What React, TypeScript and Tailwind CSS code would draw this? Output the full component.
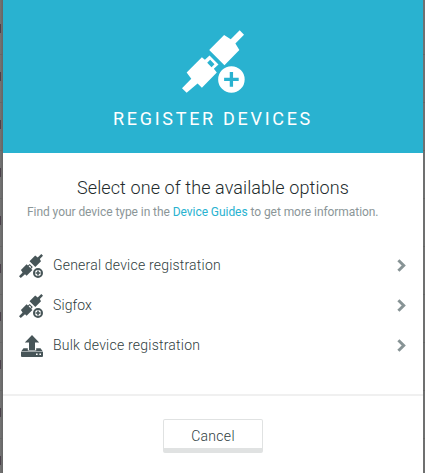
type IconProps = { className?: string; plus: string };

function ConnectorIcon({ className, plus }: IconProps) {
  return (
    <svg viewBox="35 28 190 190" className={className} fill="currentColor" aria-hidden="true">
      <path d="M209 29 L222 42 L196 69 L208 88 L163 134 L117 88 L162 43 L182 56 Z" />
      <path
        fillRule="evenodd"
        d="M95 110 L104 118 L118 105 L145 132 L131 145 L140 156 L95 202 L82 189 L49 217 L35 204 L63 175 L49 156 Z M120 118 L111 127 L124 140 L133 131 Z"
      />
      <circle cx="184" cy="177" r="40" />
      <path d="M179 155h10v17h17v10h-17v17h-10v-17h-17v-10h17z" fill={plus} />
    </svg>
  );
}

function SmallConnectorIcon() {
  return (
    <svg viewBox="0 0 24 24" className="mt-0.5 h-6 w-6" fill="currentColor" aria-hidden="true">
      <path d="M22.3 0 L24 1.7 L20.8 5 L22 7.3 L16.3 13 L10.5 7.3 L16.2 1.6 L18.7 3.5 Z" />
      <path
        fillRule="evenodd"
        d="M7.6 10.2 L9 11.5 L10.6 9.9 L13.8 13.1 L12.2 14.7 L13.4 16 L7.6 21.7 L6 20.3 L1.8 24 L0 22.3 L3.6 18.5 L1.9 16 Z M10.6 11.4 L9.7 12.3 L11.3 13.9 L12.2 13 Z"
      />
      <circle cx="19" cy="19" r="4" fill="#fff" stroke="currentColor" strokeWidth="2" />
      <path d="M18.2 16.5h1.6v1.7h1.7v1.6h-1.7v1.7h-1.6v-1.7h-1.7v-1.6h1.7z" />
    </svg>
  );
}

function UploadIcon() {
  return (
    <svg viewBox="0 0 24 24" className="h-6 w-6" fill="currentColor" aria-hidden="true">
      <path d="M13 2 L20.2 9.5 H16 V17 H10 V9.5 H5.8 Z" />
      <path
        fillRule="evenodd"
        d="M4.5 15.2 H8.8 V17.6 H17.2 V15.2 H21.5 L23.7 18.2 H2.3 Z M2 18.8 H24 V23 Q24 24 23 24 H3 Q2 24 2 23 Z M17 20.5 V22 H18.6 V20.5 Z M20.4 20.5 V22 H22 V20.5 Z"
      />
    </svg>
  );
}

const options = [
  { label: 'General device registration', icon: <SmallConnectorIcon />, spacing: 'tracking-[0.2px]' },
  { label: 'Sigfox', icon: <SmallConnectorIcon />, spacing: 'tracking-[0.1px]' },
  { label: 'Bulk device registration', icon: <UploadIcon />, spacing: 'tracking-[0.22px]' },
];

export default function App() {
  return (
    <div className="flex h-[473px] w-[425px] overflow-hidden bg-[#747474] font-['Roboto','Liberation_Sans',sans-serif]">
      <div className="w-[3px] shrink-0 bg-linear-to-r from-[#747474] to-[#656565]">
        {Array.from({ length: 10 }, (_, i) => (
          <div key={i} className={`border-b border-[#666] ${i === 0 ? 'h-[55px] pt-6' : 'h-12 pt-[17px]'}`}>
            <div className="h-[9px] w-px bg-[#4b414b]" />
          </div>
        ))}
      </div>
      <main className="flex w-[420px] shrink-0 flex-col bg-white">
        <header className="flex h-[153px] flex-col items-center bg-[#29b2d0] pt-[30px] text-white">
          <ConnectorIcon className="h-[63px] w-[63px]" plus="#29b2d0" />
          <h1 className="mt-[14px] text-[18px] leading-[24px] tracking-[2.7px] whitespace-nowrap">
            REGISTER DEVICES
          </h1>
        </header>
        <section className="h-[241px]">
          <h2 className="mt-[23px] pl-[74px] text-[18px] leading-6 font-light tracking-[0.1px] whitespace-nowrap text-[#222b2d]">
            Select one of the available options
          </h2>
          <p className="mt-1 pl-6 text-[12px] leading-4 tracking-[-0.06px] whitespace-nowrap text-[#8b9698]">
            Find your device type in the <a className="text-[#29b2d0]">Device Guides</a> to get more information.
          </p>
          <ul className="mt-[25px]">
            {options.map((option) => (
              <li key={option.label} className="flex h-10 items-center pr-[17px] pl-4 text-[#475558]">
                {option.icon}
                <span className={`ml-[10px] text-[14px] leading-5 font-light whitespace-nowrap text-[#2f3d40] ${option.spacing}`}>
                  {option.label}
                </span>
                <svg viewBox="0 0 9 13" className="mt-px ml-auto h-[13px] w-[9px]" aria-hidden="true">
                  <path d="M1.4 1.2 L6.7 6.5 L1.4 11.8" fill="none" stroke="#879395" strokeWidth="3" />
                </svg>
              </li>
            ))}
          </ul>
        </section>
        <footer className="flex grow justify-center border-t-2 border-[#f0f0f0] pt-[23px]">
          <button className="h-[34px] w-[100px] rounded-[2px] border border-b-[5px] border-[#e0e2e2] bg-white pt-[3px] text-[14px] leading-5 font-light tracking-[0.3px] text-[#2f3d40]">
            Cancel
          </button>
        </footer>
      </main>
      <div className="w-[2px] shrink-0 bg-[#6f7070]">
        {Array.from({ length: 10 }, (_, i) => (
          <div key={i} className={i === 0 ? 'h-[55px] border-b border-[#666]' : 'h-12 border-b border-[#666]'} />
        ))}
      </div>
    </div>
  );
}
